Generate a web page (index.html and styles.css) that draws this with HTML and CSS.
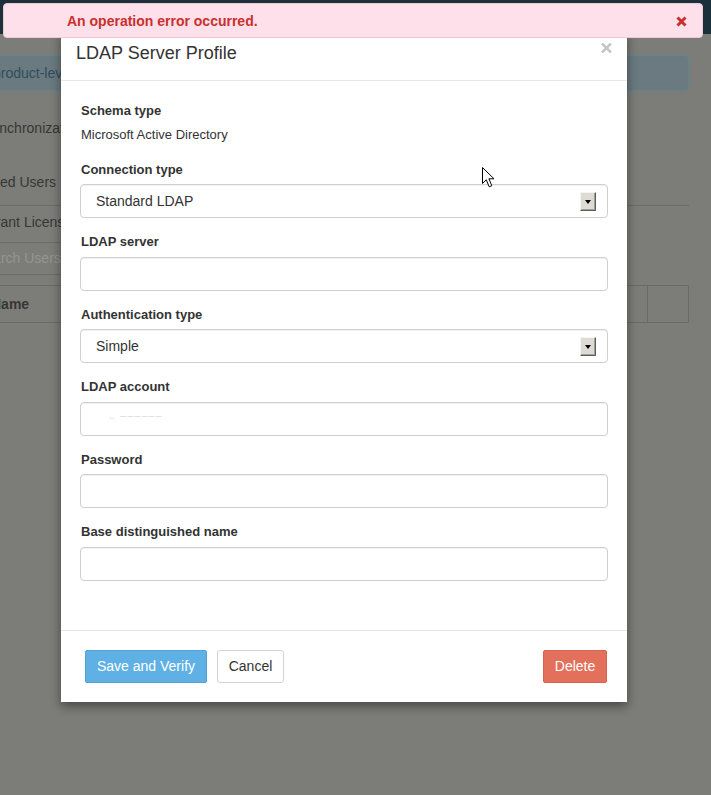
FILE: index.html
```html
<!DOCTYPE html>
<html>
<head>
<meta charset="utf-8">
<link rel="stylesheet" href="styles.css">
</head>
<body>
<div class="topbar"></div>
<div class="page">
  <div class="info">product-level license is required</div>
  <div class="bg-text t-sync">Synchronization</div>
  <div class="bg-text t-users">Assigned Users</div>
  <div class="bg-rule"></div>
  <div class="bg-text t-grant">Grant Licenses</div>
  <div class="bg-search">Search Users</div>
  <div class="bg-table">
    <div class="bg-th">Name</div>
    <div class="bg-col"></div>
  </div>
</div>

<div class="alert">
  <span class="alert-text">An operation error occurred.</span>
  <svg class="alert-close" width="11" height="11" viewBox="0 0 11 11"><path d="M1.5 1.5 L9.5 9.5 M9.5 1.5 L1.5 9.5" stroke="#c9302c" stroke-width="3" stroke-linecap="butt"/></svg>
</div>

<div class="modal">
  <div class="modal-header">
    <h4 class="modal-title">LDAP Server Profile</h4>
    <svg class="modal-close" width="11" height="10" viewBox="0 0 11 10"><path d="M1 0.5 L10 9.5 M10 0.5 L1 9.5" stroke="#c6c6c6" stroke-width="2.6"/></svg>
  </div>
  <div class="modal-body">
    <div class="group schema">
      <div class="label">Schema type</div>
      <div class="static">Microsoft Active Directory</div>
    </div>
    <div class="group">
      <div class="label">Connection type</div>
      <div class="control select"><span>Standard LDAP</span><span class="sel-btn"><i></i></span></div>
    </div>
    <div class="group">
      <div class="label">LDAP server</div>
      <div class="control"></div>
    </div>
    <div class="group">
      <div class="label">Authentication type</div>
      <div class="control select"><span>Simple</span><span class="sel-btn"><i></i></span></div>
    </div>
    <div class="group">
      <div class="label">LDAP account</div>
      <div class="control"><span class="blur">‥ ‒‒‒‒‒‒</span></div>
    </div>
    <div class="group">
      <div class="label">Password</div>
      <div class="control"></div>
    </div>
    <div class="group last">
      <div class="label">Base distinguished name</div>
      <div class="control"></div>
    </div>
  </div>
  <div class="modal-footer">
    <button class="btn btn-primary">Save and Verify</button>
    <button class="btn btn-default">Cancel</button>
    <span class="spacer"></span>
    <button class="btn btn-danger">Delete</button>
  </div>
</div>

<svg class="cursor" width="14" height="22" viewBox="0 0 14 22"><path d="M0.5 0.5 L0.5 16.5 L4.3 12.8 L7.2 19.8 L9.8 18.7 L6.9 11.8 L12 11.8 Z" fill="#fff" stroke="#000" stroke-width="1" stroke-linejoin="miter"/></svg>
</body>
</html>
```

FILE: styles.css
```css
* { box-sizing: border-box; }
html, body { margin: 0; padding: 0; }
body {
  width: 711px;
  height: 795px;
  overflow: hidden;
  background: #7c7d79;
  font-family: "Liberation Sans", Arial, sans-serif;
  font-size: 14px;
  color: #333;
  position: relative;
}

/* ---------- background page (dimmed) ---------- */
.topbar {
  height: 34px;
  background: #1a303b;
}
.page {
  margin-left: -45px;
  width: 734px;
  color: #363636;
}
.info {
  margin: 21px 0 0 22px;
  height: 36px;
  line-height: 34px;
  padding: 0 15px;
  background: #6b7a80;
  border: 1px solid #5f8690;
  border-radius: 4px;
  color: #2b4e5c;
  white-space: nowrap;
  overflow: hidden;
}
.bg-text { white-space: nowrap; line-height: 20px; }
.t-sync { margin: 27px 0 0 28px; }
.t-users { margin: 34px 0 0 3px; }
.bg-rule {
  height: 1px;
  background: #6b6c69;
  margin: 13px 0 0 0;
}
.t-grant { margin: 6px 0 0 30px; }
.bg-search {
  margin: 10px 0 0 8px;
  width: 200px;
  height: 33px;
  border: 1px solid #6c6d6a;
  border-radius: 3px;
  line-height: 31px;
  padding-left: 12px;
  color: #949592;
  white-space: nowrap;
}
.bg-table {
  margin: 10px 0 0 27px;
  height: 38px;
  border: 1px solid #6a6b68;
  display: flex;
  justify-content: space-between;
}
.bg-th {
  font-weight: bold;
  line-height: 36px;
  padding-left: 8px;
}
.bg-col {
  width: 41px;
  border-left: 1px solid #6a6b68;
}

/* ---------- error alert ---------- */
.alert {
  position: absolute;
  left: 3px;
  top: 3px;
  width: 700px;
  height: 35px;
  background: #fee0ea;
  border: 1px solid #f0c8d4;
  border-radius: 4px;
  display: flex;
  align-items: center;
  padding: 0 15px 0 63px;
  z-index: 3;
}
.alert-text {
  flex: 1;
  color: #c9302c;
  font-weight: bold;
  font-size: 14px;
}
.alert-close { display: block; margin-top: 1px; }

/* ---------- modal ---------- */
.modal {
  position: absolute;
  left: 61px;
  top: 31px;
  width: 566px;
  background: #fff;
  box-shadow: 0 4px 10px rgba(0, 0, 0, 0.45);
  z-index: 2;
}
.modal-header {
  padding: 12px 15px 17px;
  border-bottom: 1px solid #e8e8e8;
  display: flex;
  justify-content: space-between;
  align-items: flex-start;
}
.modal-title {
  margin: 0;
  font-size: 18px;
  font-weight: normal;
  line-height: 20px;
  color: #333;
}
.modal-close { display: block; margin: 0 0 0 0; }

.modal-body {
  padding: 21px 19px 49px 19px;
}
.group { margin-bottom: 15px; }
.group.schema { margin-bottom: 17px; }
.group.last { margin-bottom: 0; }
.label {
  font-size: 13px;
  font-weight: bold;
  line-height: 18px;
  margin-bottom: 5.5px;
  padding-left: 1px;
  color: #333;
}
.static {
  font-size: 13px;
  line-height: 18px;
  padding-left: 1px;
  color: #333;
}
.control {
  height: 34px;
  border: 1px solid #cfcfcf;
  border-radius: 4px;
  box-shadow: inset 0 1px 1px rgba(0, 0, 0, 0.06);
  display: flex;
  align-items: center;
  padding: 0 11px 0 15px;
  font-size: 14px;
  color: #333;
}
.select { justify-content: space-between; }
.sel-btn {
  width: 16px;
  height: 19px;
  background: #dedbd5;
  border-top: 1px solid #f4f4f4;
  border-left: 1px solid #f4f4f4;
  border-right: 1px solid #5c5c5c;
  border-bottom: 1px solid #5c5c5c;
  box-shadow: inset -1px -1px 0 #a3a09a;
  display: flex;
  align-items: center;
  justify-content: center;
}
.sel-btn i {
  display: block;
  width: 0;
  height: 0;
  border-left: 3.5px solid transparent;
  border-right: 3.5px solid transparent;
  border-top: 4px solid #000;
  margin-top: 1px;
}
.blur {
  color: #dcdcdc;
  font-size: 11px;
  letter-spacing: 1px;
  margin-left: 13px;
  margin-top: -8px;
}

.modal-footer {
  border-top: 1px solid #e5e5e5;
  padding: 19px 20px 19px 24px;
  display: flex;
  align-items: center;
  gap: 10px;
}
.spacer { flex: 1; }
.btn {
  height: 33px;
  font-family: "Liberation Sans", Arial, sans-serif;
  font-size: 14px;
  border-radius: 2px;
  border: 1px solid transparent;
  padding: 0;
  white-space: nowrap;
  cursor: pointer;
}
.btn-primary {
  width: 122px;
  background: #5fb0e5;
  border-color: #4ea3da;
  color: #fff;
}
.btn-default {
  width: 67px;
  background: #fff;
  border-color: #d2d2d2;
  color: #333;
  border-radius: 3px;
}
.btn-danger {
  width: 64px;
  background: #e2705a;
  border-color: #d9634c;
  color: #fff;
}

.cursor {
  position: absolute;
  left: 482px;
  top: 167px;
  z-index: 5;
}
```
